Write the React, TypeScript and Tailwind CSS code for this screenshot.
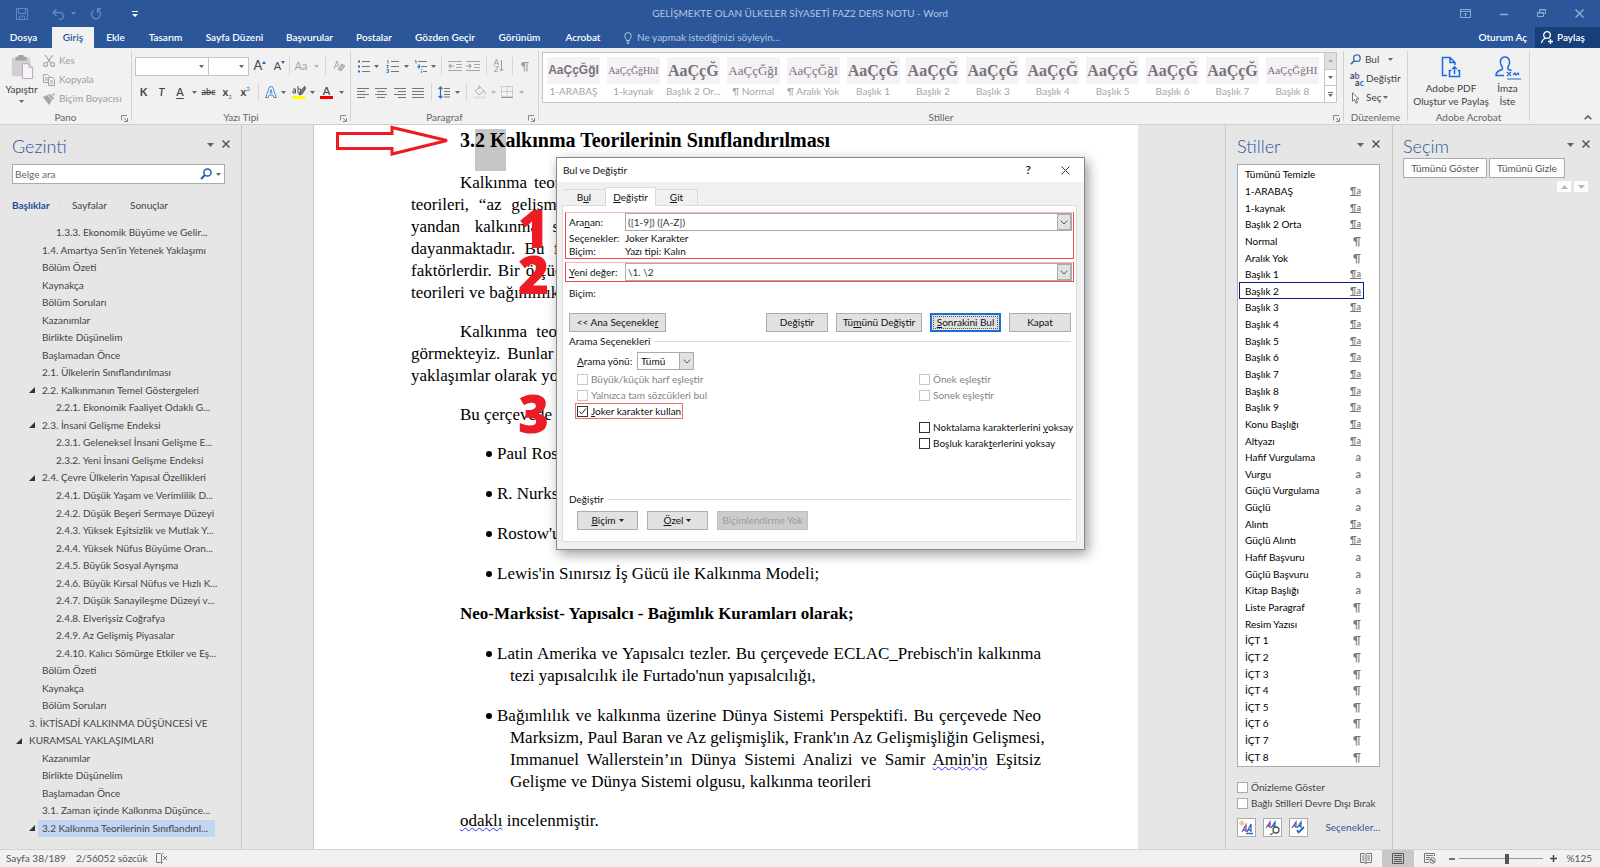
import type { ReactNode } from 'react';

type NavItem = { text: string; level: 1 | 2 | 3; open?: boolean; active?: boolean };

const NAV: NavItem[] = [
  { text: '1.3.3. Ekonomik Büyüme ve Gelir...', level: 3 },
  { text: '1.4. Amartya Sen’in Yetenek Yaklaşımı', level: 2 },
  { text: 'Bölüm Özeti', level: 2 },
  { text: 'Kaynakça', level: 2 },
  { text: 'Bölüm Soruları', level: 2 },
  { text: 'Kazanımlar', level: 2 },
  { text: 'Birlikte Düşünelim', level: 2 },
  { text: 'Başlamadan Önce', level: 2 },
  { text: '2.1. Ülkelerin Sınıflandırılması', level: 2 },
  { text: '2.2. Kalkınmanın Temel Göstergeleri', level: 2, open: true },
  { text: '2.2.1. Ekonomik Faaliyet Odaklı G...', level: 3 },
  { text: '2.3. İnsani Gelişme Endeksi', level: 2, open: true },
  { text: '2.3.1. Geleneksel İnsani Gelişme E...', level: 3 },
  { text: '2.3.2. Yeni İnsani Gelişme Endeksi', level: 3 },
  { text: '2.4. Çevre Ülkelerin Yapısal Özellikleri', level: 2, open: true },
  { text: '2.4.1. Düşük Yaşam ve Verimlilik D...', level: 3 },
  { text: '2.4.2. Düşük Beşeri Sermaye Düzeyi', level: 3 },
  { text: '2.4.3. Yüksek Eşitsizlik ve Mutlak Y...', level: 3 },
  { text: '2.4.4. Yüksek Nüfus Büyüme Oran...', level: 3 },
  { text: '2.4.5. Büyük Sosyal Ayrışma', level: 3 },
  { text: '2.4.6. Büyük Kırsal Nüfus ve Hızlı K...', level: 3 },
  { text: '2.4.7. Düşük Sanayileşme Düzeyi v...', level: 3 },
  { text: '2.4.8. Elverişsiz Coğrafya', level: 3 },
  { text: '2.4.9. Az Gelişmiş Piyasalar', level: 3 },
  { text: '2.4.10. Kalıcı Sömürge Etkiler ve Eş...', level: 3 },
  { text: 'Bölüm Özeti', level: 2 },
  { text: 'Kaynakça', level: 2 },
  { text: 'Bölüm Soruları', level: 2 },
  { text: '3. İKTİSADİ KALKINMA DÜŞÜNCESİ VE', level: 1 },
  { text: 'KURAMSAL YAKLAŞIMLARI', level: 1, open: true },
  { text: 'Kazanımlar', level: 2 },
  { text: 'Birlikte Düşünelim', level: 2 },
  { text: 'Başlamadan Önce', level: 2 },
  { text: '3.1. Zaman içinde Kalkınma Düşünce...', level: 2 },
  { text: '3.2 Kalkınma Teorilerinin Sınıflandırıl...', level: 2, open: true, active: true },
];

const LEVEL_PAD = { 1: 'pl-4', 2: 'pl-[29px]', 3: 'pl-[43px]' };

// kind: l = bağlı (paragraf + karakter), p = paragraf, c = karakter
const STYLES: [string, string][] = [
  ['Tümünü Temizle', ''],
  ['1-ARABAŞ', 'l'],
  ['1-kaynak', 'l'],
  ['Başlık 2 Orta', 'l'],
  ['Normal', 'p'],
  ['Aralık Yok', 'p'],
  ['Başlık 1', 'l'],
  ['Başlık 2', 'l'],
  ['Başlık 3', 'l'],
  ['Başlık 4', 'l'],
  ['Başlık 5', 'l'],
  ['Başlık 6', 'l'],
  ['Başlık 7', 'l'],
  ['Başlık 8', 'l'],
  ['Başlık 9', 'l'],
  ['Konu Başlığı', 'l'],
  ['Altyazı', 'l'],
  ['Hafif Vurgulama', 'c'],
  ['Vurgu', 'c'],
  ['Güçlü Vurgulama', 'c'],
  ['Güçlü', 'c'],
  ['Alıntı', 'l'],
  ['Güçlü Alıntı', 'l'],
  ['Hafif Başvuru', 'c'],
  ['Güçlü Başvuru', 'c'],
  ['Kitap Başlığı', 'c'],
  ['Liste Paragraf', 'p'],
  ['Resim Yazısı', 'p'],
  ['İÇT 1', 'p'],
  ['İÇT 2', 'p'],
  ['İÇT 3', 'p'],
  ['İÇT 4', 'p'],
  ['İÇT 5', 'p'],
  ['İÇT 6', 'p'],
  ['İÇT 7', 'p'],
  ['İÇT 8', 'p'],
];

const BIG = 'font-["Liberation_Serif"] font-bold text-[16px]';
const GALLERY = [
  { name: '1-ARABAŞ', sample: 'AaÇçĞğI', cls: 'font-["Liberation_Sans"] font-bold text-[12px]' },
  { name: '1-kaynak', sample: 'AaÇçĞğHhI', cls: 'font-["Liberation_Serif"] text-[10px]' },
  { name: 'Başlık 2 Or...', sample: 'AaÇçĞ', cls: BIG },
  { name: '¶ Normal', sample: 'AaÇçĞğI', cls: 'font-["Liberation_Serif"] text-[13px]' },
  { name: '¶ Aralık Yok', sample: 'AaÇçĞğI', cls: 'font-["Liberation_Serif"] text-[13px]' },
  { name: 'Başlık 1', sample: 'AaÇçĞ', cls: BIG },
  { name: 'Başlık 2', sample: 'AaÇçĞ', cls: BIG },
  { name: 'Başlık 3', sample: 'AaÇçĞ', cls: BIG },
  { name: 'Başlık 4', sample: 'AaÇçĞ', cls: BIG },
  { name: 'Başlık 5', sample: 'AaÇçĞ', cls: BIG },
  { name: 'Başlık 6', sample: 'AaÇçĞ', cls: BIG },
  { name: 'Başlık 7', sample: 'AaÇçĞ', cls: BIG },
  { name: 'Başlık 8', sample: 'AaÇçĞğHI', cls: 'font-["Liberation_Serif"] text-[11px]' },
];

function Caret({ className = 'text-[#666]' }: { className?: string }) {
  return (
    <svg viewBox="0 0 5 3" className={`h-[3px] w-[5px] shrink-0 ${className}`}>
      <path d="M0 0h5L2.5 3z" fill="currentColor" />
    </svg>
  );
}

function Chevron() {
  return (
    <svg viewBox="0 0 8 5" className="h-[5px] w-2" fill="none" stroke="#555">
      <path d="M.7.7 4 4 7.300.7" />
    </svg>
  );
}

function Cell({ w, label, children }: { w: string; label: string; children: ReactNode }) {
  return (
    <button aria-label={label} className={`flex h-[18px] shrink-0 items-center justify-center ${w}`}>
      {children}
    </button>
  );
}

function Drop({ w, dim }: { w: string; dim?: boolean }) {
  return (
    <button aria-label="Diğer" className={`flex h-[18px] shrink-0 items-center justify-center ${w}`}>
      <Caret className={dim ? 'text-[#b5b5b5]' : 'text-[#666]'} />
    </button>
  );
}

function Bar({ w }: { w: string }) {
  return (
    <span className={`flex h-[18px] shrink-0 justify-center ${w}`}>
      <span className="w-px bg-[#d4d4d4]" />
    </span>
  );
}

function Divider() {
  return <span className="my-[3px] w-px shrink-0 bg-[#d2d2d2]" />;
}

function Group({
  label,
  w,
  launcher,
  children,
}: {
  label: string;
  w: string;
  launcher?: boolean;
  children: ReactNode;
}) {
  return (
    <section className={`flex flex-col ${w}`}>
      <div className="h-[63px]">{children}</div>
      <div className="relative h-[13px] text-center text-[10px] leading-[13px] text-[#666]">
        {label}
        {launcher && (
          <button aria-label={`${label} ayarları`} className="absolute right-[3px] top-1">
            <svg viewBox="0 0 7 7" className="h-[7px] w-[7px]" fill="none" stroke="#888">
              <path d="M.5 5.500V.5H6M3 3l3 3M6.500 3v3.500H3" />
            </svg>
          </button>
        )}
      </div>
    </section>
  );
}

function Lines({ rows }: { rows: [number, number][] }) {
  return (
    <svg viewBox="0 0 12 11" className="h-[11px] w-3" stroke="#777">
      {rows.map(([a, b], i) => (
        <path key={i} d={`M${a} ${i * 3 + 1}.5H${b}`} />
      ))}
    </svg>
  );
}

function ListIcon({ kind }: { kind: 'dot' | 'num' | 'multi' }) {
  return (
    <svg viewBox="0 0 13 13" className="h-[13px] w-[13px]" stroke="#777">
      {kind === 'dot' && (
        <>
          <path d="M5 1.500h8M5 6.500h8M5 11.500h8" />
          <path d="M1 1.500h2M1 6.500h2M1 11.500h2" stroke="#2b6cb5" strokeWidth="2" />
        </>
      )}
      {kind === 'num' && (
        <>
          <path d="M5 1.500h8M5 6.500h8M5 11.500h8" />
          <path d="M1 .5h1v3M.5 5.500h2l-1.500 2h1.500M.5 9.500h2v3H.5M1 11h1" fill="none" stroke="#2b6cb5" strokeWidth=".8" />
        </>
      )}
      {kind === 'multi' && (
        <>
          <path d="M4 1.500h9M7 6.500h6M9 11.500h4" />
          <path d="M1 .5h1v3M4 5h1.500v3H4V6.500h1.500M7.500 9v1M7.500 11v2" fill="none" stroke="#2b6cb5" strokeWidth=".9" />
        </>
      )}
    </svg>
  );
}

function IndentIcon({ out }: { out?: boolean }) {
  return (
    <svg viewBox="0 0 14 11" className="h-[11px] w-[14px]" fill="none" stroke="#a5a5a5">
      <path d="M0 .5h14M8 3.500h6M8 6.500h6M0 9.500h14" />
      <path d={out ? 'M6 5H1M3 3 1 5l2 2' : 'M0 5h5M3 3l2 2-2 2'} strokeWidth="1.200" />
    </svg>
  );
}

function SearchIcon({ color, size }: { color: string; size: string }) {
  return (
    <svg viewBox="0 0 12 12" className={size} fill="none" stroke={color}>
      <circle cx="7.500" cy="4.500" r="3.600" strokeWidth="1.500" />
      <path d="M5 7 1 11" strokeWidth="2" />
    </svg>
  );
}

function TitleBar() {
  return (
    <header className="relative flex h-[27px] items-center bg-[#2b579a] text-[#6487bd]">
      <button aria-label="Kaydet" className="ml-4">
        <svg viewBox="0 0 12 12" className="h-3 w-3" fill="none" stroke="currentColor">
          <path d="M.5.5h11v11H.500zM2.500.5v5h7v-5M3.500 11.500v-3.500h5v3.500" />
        </svg>
      </button>
      <button aria-label="Geri al" className="ml-6">
        <svg viewBox="0 0 13 12" className="h-3 w-[13px]" fill="none" stroke="currentColor" strokeWidth="1.500">
          <path d="M4.500 1 1 4.500 4.500 8M1 4.500h7a3.500 3.500 0 0 1 0 7H6.500" />
        </svg>
      </button>
      <button aria-label="Geri al listesi" className="ml-[6px]">
        <Caret className="text-[#6487bd]" />
      </button>
      <button aria-label="Yinele" className="ml-[14px]">
        <svg viewBox="0 0 12 12" className="h-3 w-3" fill="none" stroke="currentColor" strokeWidth="1.400">
          <path d="M8 2.200A4.500 4.500 0 1 1 3.500 2.500M7 .8h4M7.600 1v4" />
        </svg>
      </button>
      <button aria-label="Hızlı erişim" className="ml-[30px]">
        <svg viewBox="0 0 6 6" className="h-[6px] w-[6px]" fill="#fff">
          <path d="M0 0h6v1H0zM0 3h6L3 6z" />
        </svg>
      </button>
      <h1 className="absolute inset-x-0 text-center text-[10px] leading-[27px] text-[#b4c6e0]">
        GELİŞMEKTE OLAN ÜLKELER SİYASETİ FAZ2 DERS NOTU - Word
      </h1>
      <div className="relative ml-auto mr-4 flex items-center gap-[29px] text-[#8ea9d1]">
        <button aria-label="Şerit seçenekleri">
          <svg viewBox="0 0 11 9" className="h-[9px] w-[11px]" fill="none" stroke="currentColor">
            <path d="M.5.5h10v8H.500zM.5 2.500h10M5.500 7.500V4M4 5.500 5.500 4 7 5.500" />
          </svg>
        </button>
        <button aria-label="Simge durumuna küçült">
          <svg viewBox="0 0 8 9" className="h-[9px] w-2" stroke="currentColor" strokeWidth="1.500">
            <path d="M0 5.500h8" />
          </svg>
        </button>
        <button aria-label="Geri yükle">
          <svg viewBox="0 0 9 9" className="h-[9px] w-[9px]" fill="none" stroke="currentColor">
            <path d="M.5 3.500h6v4H.500zM2.500 3.500v-3h6v4h-2M2.500 1h6M.5 4h6" />
          </svg>
        </button>
        <button aria-label="Kapat">
          <svg viewBox="0 0 9 9" className="h-[9px] w-[9px]" stroke="currentColor" strokeWidth="1.500">
            <path d="M.5.5l8 8M8.500.5l-8 8" />
          </svg>
        </button>
      </div>
    </header>
  );
}

const TABS = [
  ['Ekle', 'w-[43px]'],
  ['Tasarım', 'w-[57px]'],
  ['Sayfa Düzeni', 'w-[81px]'],
  ['Başvurular', 'w-[69px]'],
  ['Postalar', 'w-[60px]'],
  ['Gözden Geçir', 'w-[82px]'],
  ['Görünüm', 'w-[67px]'],
  ['Acrobat', 'w-[60px]'],
];

function TabRow() {
  return (
    <nav className="flex h-[21px] items-center bg-[#2b579a] text-[10px] font-semibold text-white">
      <button className="w-[47px]">Dosya</button>
      <button className="ml-[5px] h-full w-[42px] bg-[#f1f1f1] text-[#2b579a]">Giriş</button>
      {TABS.map(([t, w]) => (
        <button key={t} className={`shrink-0 whitespace-nowrap ${w}`}>
          {t}
        </button>
      ))}
      <label className="ml-[11px] flex flex-1 items-center gap-[5px] text-[#b4c6e0]">
        <svg viewBox="0 0 8 12" className="h-3 w-2" fill="none" stroke="currentColor">
          <path d="M2.500 8.500C2.500 7 .8 6 .8 3.800a3.200 3.200 0 0 1 6.400 0C7.200 6 5.500 7 5.500 8.500zM2.500 10h3M3 11.500h2" />
        </svg>
        <input
          aria-label="Yardım"
          placeholder="Ne yapmak istediğinizi söyleyin..."
          className="w-48 font-normal outline-none placeholder:text-[#b4c6e0]"
        />
      </label>
      <button className="mr-2">Oturum Aç</button>
      <button className="flex h-full w-[65px] items-center gap-1 bg-[#173f7a] pl-[6px]">
        <svg viewBox="0 0 12 13" className="h-[13px] w-3" fill="none" stroke="currentColor" strokeWidth="1.300">
          <circle cx="6" cy="4" r="3.300" />
          <path d="M4.500 7C2.500 8 .7 9.500.7 12M9.500 8v5M7 10.500h5" />
        </svg>
        Paylaş
      </button>
    </nav>
  );
}

function Ribbon() {
  return (
    <div className="flex h-[77px] border-b border-[#cfcfcf] bg-[#f1f1f1] text-[#444]">
      <Group label="Pano" w="w-[131px]" launcher>
        <div className="flex h-full">
          <button className="flex w-[43px] flex-col items-center pt-[7px]">
            <svg viewBox="0 0 24 26" className="h-6 w-6">
              <path d="M1 3h20v20H1z" fill="#d3cfd3" />
              <path d="M5 2h3a3 3 0 0 1 6 0h3v4H5z" fill="#a3a0a3" />
              <path d="M12.500 9.500h7l4 4v12h-11z" fill="#f8f2fa" stroke="#aba5b5" />
              <path d="M19.500 9.500v4h4" fill="none" stroke="#aba5b5" />
            </svg>
            <span className="mt-[3px] text-[10px] leading-[14px]">Yapıştır</span>
            <span className="mt-1">
              <Caret />
            </span>
          </button>
          <div className="flex flex-col pt-[3px] text-[10px] text-[#a0a0a0]">
            <button className="flex h-[19px] items-center gap-1">
              <svg viewBox="0 0 12 12" className="h-3 w-3" fill="none" stroke="#a5a5a5" strokeWidth="1.200">
                <path d="M2 0l6 8M10 0 4 8" />
                <circle cx="2.500" cy="9.500" r="2" />
                <circle cx="9.500" cy="9.500" r="2" />
              </svg>
              Kes
            </button>
            <button className="flex h-[19px] items-center gap-1">
              <svg viewBox="0 0 12 12" className="h-3 w-3" fill="#f1f1f1" stroke="#a5a5a5">
                <path d="M.5.5h4l2 2v6h-6z" />
                <path d="M5.500 3.500h4l2 2v6h-6zM7 7h3M7 9h3M2 4h3M2 6h3" />
              </svg>
              Kopyala
            </button>
            <button className="flex h-[19px] items-center gap-1 whitespace-nowrap">
              <svg viewBox="0 0 12 12" className="h-3 w-3" fill="#a5a5a5">
                <path d="M0 4l4-2 5 5-3 5zM5 2l2-1 4 4-1 2zM9 2l2-2 1 1-2 2z" />
              </svg>
              Biçim Boyacısı
            </button>
          </div>
        </div>
      </Group>
      <Divider />
      <Group label="Yazı Tipi" w="w-[218px]" launcher>
        <div className="flex pl-[3px] pt-[9px]">
          <div className="flex h-[19px] w-[74px] items-center border border-[#c6c6c6] bg-white pr-1">
            <input aria-label="Yazı tipi" className="min-w-0 flex-1 outline-none" />
            <Caret />
          </div>
          <div className="-ml-px flex h-[19px] w-[41px] items-center border border-[#c6c6c6] bg-white pr-1">
            <input aria-label="Boyut" className="min-w-0 flex-1 outline-none" />
            <Caret />
          </div>
          <Cell w="w-[22px]" label="Büyüt">
            <span className="text-[13px]">A</span>
            <svg viewBox="0 0 4 3" className="mb-2 h-[3px] w-1" fill="#2b6cb5">
              <path d="M0 3h4L2 0z" />
            </svg>
          </Cell>
          <Cell w="w-[17px]" label="Küçült">
            <span className="text-[11px]">A</span>
            <svg viewBox="0 0 4 3" className="mb-2 h-[3px] w-1" fill="#2b6cb5">
              <path d="M0 0h4L2 3z" />
            </svg>
          </Cell>
          <Bar w="w-[3px]" />
          <Cell w="w-[20px]" label="Büyük küçük harf">
            <span className="text-[11px] text-[#a5a5a5]">Aa</span>
          </Cell>
          <Drop w="w-[10px]" dim />
          <Bar w="w-[8px]" />
          <Cell w="w-[20px]" label="Biçimlendirmeyi temizle">
            <svg viewBox="0 0 12 12" className="h-3 w-3" fill="none" stroke="#aaa">
              <path d="M1 9 4 1l2 5M2 6h3" />
              <path d="M5 9l4-5 3 2-4 5z" fill="#bbb" />
            </svg>
          </Cell>
        </div>
        <div className="flex pl-[3px] pt-[7px] text-[11px]">
          <Cell w="w-[17px]" label="Kalın">
            <b>K</b>
          </Cell>
          <Cell w="w-[19px]" label="İtalik">
            <i className="font-semibold">T</i>
          </Cell>
          <Cell w="w-[18px]" label="Altı çizili">
            <span className="font-semibold underline underline-offset-2">A</span>
          </Cell>
          <Drop w="w-[10px]" />
          <Cell w="w-[19px]" label="Üstü çizili">
            <span className="text-[9px] font-semibold line-through">abc</span>
          </Cell>
          <Cell w="w-[18px]" label="Alt simge">
            <b>x</b>
            <span className="mt-2 text-[6px] text-[#2b6cb5]">2</span>
          </Cell>
          <Cell w="w-[18px]" label="Üst simge">
            <b>x</b>
            <span className="mb-2 text-[6px] text-[#2b6cb5]">2</span>
          </Cell>
          <Bar w="w-[8px]" />
          <Cell w="w-[17px]" label="Metin efektleri">
            <svg viewBox="0 0 12 13" className="h-[13px] w-3" fill="#fff" stroke="#4a86c5">
              <path d="M.7 11.500 4.500.8h3l3.800 10.700H8.800L8 9H4l-.8 2.500zM4.800 7h2.400L6 3.500z" />
            </svg>
          </Cell>
          <Drop w="w-[9px]" />
          <Cell w="w-[21px]" label="Vurgu rengi">
            <svg viewBox="0 0 14 14" className="h-[14px] w-[14px]" fill="none" stroke="#555">
              <path d="M1 4h2.500v4H1V6h2.500M6 1v7h2.500V4H6" />
              <path d="M13 1 8 7l-1 3 3-1 4-6" fill="#777" />
              <path d="M0 12.500h13" stroke="#ffff00" strokeWidth="3" />
            </svg>
          </Cell>
          <Drop w="w-[7px]" />
          <Cell w="w-[21px]" label="Yazı rengi">
            <span className="border-b-[3px] border-[#f00000] px-[3px] font-semibold leading-[11px]">A</span>
          </Cell>
          <Drop w="w-[8px]" />
        </div>
      </Group>
      <Divider />
      <Group label="Paragraf" w="w-[187px]" launcher>
        <div className="flex pl-1 pt-[9px]">
          <Cell w="w-[16px]" label="Madde işaretleri">
            <ListIcon kind="dot" />
          </Cell>
          <Drop w="w-[11px]" />
          <Cell w="w-[20px]" label="Numaralandırma">
            <ListIcon kind="num" />
          </Cell>
          <Drop w="w-[8px]" />
          <Cell w="w-[20px]" label="Çok düzeyli liste">
            <ListIcon kind="multi" />
          </Cell>
          <Drop w="w-[7px]" />
          <Bar w="w-[9px]" />
          <Cell w="w-[17px]" label="Girintiyi azalt">
            <IndentIcon out />
          </Cell>
          <Cell w="w-[19px]" label="Girintiyi artır">
            <IndentIcon />
          </Cell>
          <Bar w="w-[8px]" />
          <Cell w="w-[18px]" label="Sırala">
            <span className="flex flex-col text-[8px] leading-[7px] text-[#999]">
              <span>A</span>
              <span>Z</span>
            </span>
            <svg viewBox="0 0 5 12" className="h-3 w-[5px]" fill="none" stroke="#999">
              <path d="M2.500 0v11M.5 9l2 2 2-2" />
            </svg>
          </Cell>
          <Bar w="w-[8px]" />
          <Cell w="w-[18px]" label="Tümünü göster">
            <span className="text-[12px] text-[#999]">¶</span>
          </Cell>
        </div>
        <div className="flex pl-1 pt-2">
          <Cell w="w-[16px]" label="Sola hizala">
            <Lines rows={[[0, 12], [0, 8], [0, 12], [0, 8]]} />
          </Cell>
          <Cell w="w-[20px]" label="Ortala">
            <Lines rows={[[0, 12], [2, 10], [0, 12], [2, 10]]} />
          </Cell>
          <Cell w="w-[18px]" label="Sağa hizala">
            <Lines rows={[[0, 12], [4, 12], [0, 12], [4, 12]]} />
          </Cell>
          <Cell w="w-[18px]" label="İki yana yasla">
            <Lines rows={[[0, 12], [0, 12], [0, 12], [0, 12]]} />
          </Cell>
          <Bar w="w-[8px]" />
          <Cell w="w-[18px]" label="Satır aralığı">
            <svg viewBox="0 0 12 13" className="h-[13px] w-3" fill="none" stroke="#777">
              <path d="M6 2.500h6M6 5.500h6M6 8.500h6M6 11h6" />
              <path d="M2.500 1v11M.5 3l2-2 2 2M.5 10l2 2 2-2" stroke="#2b6cb5" strokeWidth="1.200" />
            </svg>
          </Cell>
          <Drop w="w-[8px]" />
          <Bar w="w-[10px]" />
          <Cell w="w-[17px]" label="Gölgelendirme">
            <svg viewBox="0 0 14 14" className="h-[14px] w-[14px]" fill="none" stroke="#b0b0b0">
              <path d="M2 6l5-4 4 4-5 4zM6 0v4M11.500 6c1 1.500 1 2.500.5 3.500" />
              <path d="M0 12.500h13" stroke="#e6e0e4" strokeWidth="2.500" />
            </svg>
          </Cell>
          <Drop w="w-[10px]" dim />
          <Cell w="w-[18px]" label="Kenarlıklar">
            <svg viewBox="0 0 12 12" className="h-3 w-3" fill="none" stroke="#b5a9b5">
              <path d="M.5.5h11v10H.500zM6 .5v10M.5 5.500h11" strokeDasharray="1 1" />
              <path d="M0 11.500h12" stroke="#999" />
            </svg>
          </Cell>
          <Drop w="w-[10px]" dim />
        </div>
      </Group>
      <Divider />
      <Group label="Stiller" w="min-w-0 flex-1" launcher>
        <div className="ml-[3px] mr-[6px] mt-1 flex h-[51px] border border-[#c6c6c6] bg-white">
          <div className="flex min-w-0 flex-1 justify-between overflow-hidden pl-1 pr-[5px] pt-1">
            {GALLERY.map((g) => (
              <button key={g.name} className="flex w-[53px] flex-col items-center">
                <span
                  className={`h-[27px] w-full whitespace-nowrap bg-[#f5f1f7] text-center leading-[27px] text-[#757575] ${g.cls}`}
                >
                  {g.sample}
                </span>
                <span className="whitespace-nowrap text-[10px] leading-[15px] text-[#a5a5a5]">{g.name}</span>
              </button>
            ))}
          </div>
          <div className="flex w-3 flex-col divide-y divide-[#c6c6c6] border-l border-[#c6c6c6]">
            <button aria-label="Yukarı" className="flex flex-1 items-center justify-center bg-[#e1e1e1]">
              <Caret className="rotate-180 text-[#aaa]" />
            </button>
            <button aria-label="Aşağı" className="flex flex-1 items-center justify-center">
              <Caret />
            </button>
            <button aria-label="Tüm stiller" className="flex flex-1 flex-col items-center justify-center gap-px">
              <span className="h-px w-[5px] bg-[#666]" />
              <Caret />
            </button>
          </div>
        </div>
      </Group>
      <Divider />
      <Group label="Düzenleme" w="w-[63px]">
        <div className="flex flex-col pl-[6px] pt-[2px] text-[10px]">
          <button className="flex h-[19px] items-center gap-1">
            <SearchIcon color="#3f73b5" size="h-[11px] w-[11px]" />
            Bul
            <span className="ml-[5px]">
              <Caret />
            </span>
          </button>
          <button className="flex h-[19px] items-center gap-[2px]">
            <span className="flex w-[14px] flex-col text-[9px] font-bold leading-[7px]">
              <span className="self-start">
                a<span className="text-[#8050a5]">b</span>
              </span>
              <span className="self-end">
                a<span className="text-[#2b6cb5]">c</span>
              </span>
            </span>
            Değiştir
          </button>
          <button className="flex h-[19px] items-center gap-[6px] pl-[2px]">
            <svg viewBox="0 0 8 12" className="h-3 w-2" fill="#fff" stroke="#777">
              <path d="M.5.8v8.500l2-2 1.500 4 1.500-.7L4 7h3z" />
            </svg>
            <span className="flex items-center gap-[2px]">
              Seç
              <Caret />
            </span>
          </button>
        </div>
      </Group>
      <Divider />
      <Group label="Adobe Acrobat" w="w-[121px]">
        <div className="flex pt-2 text-[10px] leading-[13px]">
          <button className="flex w-[86px] flex-col items-center whitespace-nowrap">
            <svg viewBox="0 0 20 22" className="mb-1 h-[22px] w-5" fill="none" stroke="#1b6ae0" strokeWidth="1.500">
              <path d="M6 19.500H1.500V1.500H9l5 5V9M9 1.500v5h5" />
              <path d="M10.500 14.500H8.500v6h10v-6h-2M13.500 18v-7M11.200 13l2.300-2.300L15.800 13" />
            </svg>
            <span>Adobe PDF</span>
            <span>Oluştur ve Paylaş</span>
          </button>
          <button className="flex w-[27px] flex-col items-center">
            <svg viewBox="0 0 26 24" className="mb-[2px] h-6 w-[26px]" fill="none" stroke="#1b6ae0" strokeWidth="1.500">
              <path d="M9 19.500H1c0-4 3-5 6-6 1-.5.500-2-.5-3.500C4 5 6 1 10 1s6 4 3.500 9c-1 1.500-.8 3 0 3.500l3 1" />
              <path d="M12 16l4 4M16 16l-4 4M18 19l2-2 1 2 2-2 1 2M12 23h14" strokeWidth="1.200" />
            </svg>
            <span>İmza</span>
            <span>İste</span>
          </button>
        </div>
      </Group>
      <Divider />
      <div className="flex w-[70px] items-end justify-end pb-1 pr-2">
        <button aria-label="Şeridi daralt">
          <svg viewBox="0 0 8 5" className="h-[5px] w-2" fill="none" stroke="#555" strokeWidth="1.500">
            <path d="M.7 4.300 4 1l3.300 3.300" />
          </svg>
        </button>
      </div>
    </div>
  );
}

function PaneHead({ title }: { title: string }) {
  return (
    <div className="flex h-[39px] items-start">
      <h2 className="flex-1 pt-2 text-[18px] font-light leading-[27px] text-[#2b579a]">{title}</h2>
      <button aria-label="Bölme seçenekleri" className="mt-[18px]">
        <svg viewBox="0 0 7 4" className="h-1 w-[7px]">
          <path d="M0 0h7L3.500 4z" fill="#666" />
        </svg>
      </button>
      <button aria-label={`${title} bölmesini kapat`} className="ml-2 mt-[15px]">
        <svg viewBox="0 0 8 8" className="h-2 w-2" stroke="#555" strokeWidth="1.500">
          <path d="M.5.5l7 7M7.500.5l-7 7" />
        </svg>
      </button>
    </div>
  );
}

function NavPane() {
  return (
    <aside className="flex w-[242px] shrink-0 flex-col border-r border-[#c6c6c6] pb-3">
      <div className="pl-3 pr-[11px]">
        <PaneHead title="Gezinti" />
      </div>
      <div className="ml-3 mr-4 flex h-5 items-center border border-[#ababab] bg-white pl-[2px] pr-[3px]">
        <input
          aria-label="Belge ara"
          placeholder="Belge ara"
          className="min-w-0 flex-1 text-[10px] outline-none placeholder:text-[#666]"
        />
        <SearchIcon color="#1f5aa8" size="h-3 w-3" />
        <span className="ml-1">
          <Caret />
        </span>
      </div>
      <div className="mb-[11px] mt-[13px] flex h-4 items-center pl-3 text-[10px] text-[#444]">
        <button className="w-[48px] text-left font-bold text-[#1f4e96]">Başlıklar</button>
        <button className="w-[57px] border-l border-[#e0e0e0] pl-[11px] text-left">Sayfalar</button>
        <button className="border-l border-[#e0e0e0] pl-[12px] text-left">Sonuçlar</button>
      </div>
      <ul className="mr-[26px] flex flex-1 flex-col text-[10px] text-[#444]">
        {NAV.map((n, i) => (
          <li key={i} className={`flex flex-1 items-center ${LEVEL_PAD[n.level]}`}>
            <span className="w-[9px] shrink-0">
              {n.open && (
                <svg viewBox="0 0 6 6" className="h-[6px] w-[6px]">
                  <path d="M6 0v6H0z" fill="#333" />
                </svg>
              )}
            </span>
            <a
              href="#"
              className={`flex-1 whitespace-nowrap pl-1 leading-[17px] ${n.active ? 'bg-[#c2d5f2]' : ''}`}
            >
              {n.text}
            </a>
          </li>
        ))}
      </ul>
    </aside>
  );
}

// Satır sonları belgede sabit; son satır dışındakiler iki yana yaslanır.
function Justified({ lines, first = '' }: { lines: string[]; first?: string }) {
  return (
    <p className="mt-[17px]">
      {lines.map((l, i) => (
        <span
          key={l}
          className={`block whitespace-nowrap ${i < lines.length - 1 ? '[text-align-last:justify]' : ''} ${
            i === 0 ? first : ''
          }`}
        >
          {l}
        </span>
      ))}
    </p>
  );
}

function Bullet({ children }: { children: ReactNode }) {
  return (
    <li className="mt-[18px] flex pl-[75px]">
      <span className="mt-2 h-[6px] w-[6px] shrink-0 rounded-full bg-black" />
      <div className="min-w-0 flex-1 pl-[5px]">{children}</div>
    </li>
  );
}

const WAVY = 'underline decoration-[#3333ff] decoration-wavy decoration-1 underline-offset-1';

function Document() {
  return (
    <main className="ml-[71px] mr-[87px] min-w-0 flex-1 overflow-hidden border-l border-[#c6c6c6] bg-white px-[97px] font-['Liberation_Serif'] text-[17px] leading-[22px] text-black">
      <h2 className="pl-[49px] text-[20px] font-bold leading-[30px]">
        3.<mark className="bg-[#c6c6c6] pb-5 text-black">2 K</mark>alkınma Teorilerinin Sınıflandırılması
      </h2>
      <Justified
        first="pl-[49px]"
        lines={[
          'Kalkınma teorileri literatürde farklı biçimlerde ele alınmıştır. Kalkınma olgusu ile',
          'teorileri, “az gelişmişlik” olgusunun tarihsel nedenlerini açıklamaya çalışır ve de öte',
          'yandan kalkınma sürecinin hangi temel toplumsal dinamiklere ise bağlı kaldığı',
          'dayanmaktadır. Bu faktörler hem içsel yapısal hem de dışsal temelli ve kökenli olan',
          'faktörlerdir. Bir ölçüde bu ayrım modernleşme okulunun görüşleri ile ilgili tüm anlayışlar',
          'teorileri ve bağımlılık teorilerini kapsamaktadır.',
        ]}
      />
      <Justified
        first="pl-[49px]"
        lines={[
          'Kalkınma teorilerini temel olarak iki önemli ana başlık altında toplandığını da',
          'görmekteyiz. Bunlar ana akım iktisat okulları ile daha çok eleştirel ve yapısalcı olan bir',
          'yaklaşımlar olarak yorumlanabilir.',
        ]}
      />
      <p className="mt-[17px] pl-[49px]">Bu çerçevede Modernleşme kuramları olarak;</p>
      <ul className="-mt-px">
        <Bullet>Paul Rosenstein-Rodan'ın Büyük İtiş Modeli;</Bullet>
        <Bullet>R. Nurkse'nin Dengeli Kalkınma Modeli;</Bullet>
        <Bullet>Rostow'un Kalkınma Aşamaları Modeli;</Bullet>
        <Bullet>Lewis'in Sınırsız İş Gücü ile Kalkınma Modeli;</Bullet>
      </ul>
      <p className="mt-[18px] pl-[49px] font-bold">Neo-Marksist- Yapısalcı - Bağımlık Kuramları olarak;</p>
      <ul>
        <Bullet>
          <span className="block whitespace-nowrap [text-align-last:justify]">
            Latin Amerika ve Yapısalcı tezler. Bu çerçevede ECLAC_Prebisch'in kalkınma
          </span>
          <span className="block pl-[13px]">tezi yapısalcılık ile Furtado'nun yapısalcılığı,</span>
        </Bullet>
        <Bullet>
          <span className="block whitespace-nowrap [text-align-last:justify]">
            Bağımlılık ve kalkınma üzerine Dünya Sistemi Perspektifi. Bu çerçevede Neo
          </span>
          <span className="block whitespace-nowrap pl-[13px] [text-align-last:justify]">
            Marksizm, Paul Baran ve Az gelişmişlik, Frank'ın Az Gelişmişliğin Gelişmesi,
          </span>
          <span className="block whitespace-nowrap pl-[13px] [text-align-last:justify]">
            Immanuel Wallerstein’ın Dünya Sistemi Analizi ve Samir <span className={WAVY}>Amin'in</span> Eşitsiz
          </span>
          <span className="block pl-[13px]">Gelişme ve Dünya Sistemi olgusu, kalkınma teorileri</span>
        </Bullet>
      </ul>
      <p className="mt-[17px] pl-[49px]">
        <span className={WAVY}>odaklı</span> incelenmiştir.
      </p>
    </main>
  );
}

function StyleMark({ kind }: { kind: string }) {
  if (kind === 'l') {
    return <span className="border-b border-[#777] text-[9px] font-semibold leading-[9px] text-[#777]">¶a</span>;
  }
  return (
    <span className="text-[11px] font-semibold leading-[12px] text-[#777]">
      {kind === 'p' ? '¶' : kind === 'c' ? 'a' : ''}
    </span>
  );
}

function StylesPane() {
  return (
    <aside className="flex w-[168px] shrink-0 flex-col border-l border-r border-[#c6c6c6] pb-3 pl-[11px] pr-3 text-[#444]">
      <PaneHead title="Stiller" />
      <ul className="flex flex-1 flex-col border border-[#ababab] bg-white py-px pl-px pr-[15px] text-[10px] text-black">
        {STYLES.map(([name, kind]) => (
          <li
            key={name}
            className={`flex flex-1 items-center justify-between border pl-[5px] pr-[2px] leading-[14px] ${
              name === 'Başlık 2' ? 'border-[#0a1a80]' : 'border-transparent'
            }`}
          >
            {name}
            <StyleMark kind={kind} />
          </li>
        ))}
      </ul>
      <div className="mt-3 text-[10px]">
        {['Önizleme Göster', 'Bağlı Stilleri Devre Dışı Bırak'].map((t) => (
          <label key={t} className="flex h-4 items-center gap-[3px] whitespace-nowrap">
            <input type="checkbox" className="h-[11px] w-[11px] appearance-none border border-[#ababab] bg-white" />
            {t}
          </label>
        ))}
      </div>
      <div className="mt-[7px] flex h-[19px] items-center gap-[7px]">
        {['Yeni stil', 'Stil denetçisi', 'Stilleri yönet'].map((t, i) => (
          <button
            key={t}
            aria-label={t}
            className="flex h-[19px] w-[19px] items-center justify-center border border-[#ababab] bg-white"
          >
            <svg viewBox="0 0 15 15" className="h-[15px] w-[15px]" fill="none" strokeWidth="1.300">
              <path d={i === 0 ? 'M3 12 7 5v7M4.500 10H7' : 'M1 8l4-6v6M2.500 6H5'} stroke="#8050a5" />
              <path d={i === 0 ? 'M8 12l4-8v8M9.500 10H12M7 13.500h7' : 'M6 8l4-6v6M7.500 6H10'} stroke="#2b6cb5" />
              {i === 0 && <path d="M3 0v6M0 3h6M1 1l4 4M5 1 1 5" stroke="#e8b45a" strokeWidth=".8" />}
              {i === 1 && <path d="M8 13l-3 2M8 10a3 3 0 1 0 6 0 3 3 0 1 0-6 0" stroke="#555" />}
              {i === 2 && <path d="M6 10l1.500 2.500M7 13l6-6" stroke="#2b6cb5" strokeWidth="1.800" />}
            </svg>
          </button>
        ))}
        <a href="#" className="ml-auto text-[10px] text-[#2b579a]">
          Seçenekler...
        </a>
      </div>
    </aside>
  );
}

function SelectionPane() {
  return (
    <aside className="w-[207px] shrink-0 pl-[10px] pr-[10px] text-[#555]">
      <div className="h-[33px]">
        <PaneHead title="Seçim" />
      </div>
      <div className="flex gap-[2px] text-[10px]">
        <button className="h-5 w-[84px] border border-[#ababab] bg-[#fdfdfd]">Tümünü Göster</button>
        <button className="h-5 w-[76px] border border-[#ababab] bg-[#fdfdfd]">Tümünü Gizle</button>
      </div>
      <div className="mr-[2px] mt-[3px] flex justify-end gap-[3px]">
        <button aria-label="Öne getir" className="flex h-[11px] w-[14px] items-center justify-center bg-[#fdfdfd]">
          <svg viewBox="0 0 7 4" className="h-1 w-[7px]">
            <path d="M0 4h7L3.500 0z" fill="#b5b5b5" />
          </svg>
        </button>
        <button aria-label="Arkaya gönder" className="flex h-[11px] w-[14px] items-center justify-center bg-[#fdfdfd]">
          <svg viewBox="0 0 7 4" className="h-1 w-[7px]">
            <path d="M0 0h7L3.500 4z" fill="#b5b5b5" />
          </svg>
        </button>
      </div>
    </aside>
  );
}

function Combo({ id, value }: { id: string; value: string }) {
  return (
    <div className="flex h-[18px] flex-1 border border-[#ababab] bg-white">
      <input id={id} defaultValue={value} className="min-w-0 flex-1 pl-[2px] text-[#333] outline-none" />
      <button
        aria-label="Listeyi aç"
        className="flex w-[14px] items-center justify-center border border-[#ababab] bg-[#e1e1e1]"
      >
        <Chevron />
      </button>
    </div>
  );
}

function Check({
  children,
  disabled,
  checked,
}: {
  children: ReactNode;
  disabled?: boolean;
  checked?: boolean;
}) {
  return (
    <label
      className={`flex h-3 w-fit items-center gap-[3px] whitespace-nowrap ${disabled ? 'text-[#838383]' : ''} ${
        checked ? 'outline outline-offset-1 outline-[#f26d70]' : ''
      }`}
    >
      <span className="relative flex">
        <input
          type="checkbox"
          disabled={disabled}
          defaultChecked={checked}
          className={`peer h-[11px] w-[11px] appearance-none border bg-white ${
            disabled ? 'border-[#c8c8c8]' : 'border-[#333]'
          }`}
        />
        <svg
          viewBox="0 0 11 11"
          className="pointer-events-none absolute inset-0 hidden h-[11px] w-[11px] peer-checked:block"
          fill="none"
          stroke="#222"
        >
          <path d="M2.500 5.500l2 2.500 4.500-5.500" />
        </svg>
      </span>
      <span>{children}</span>
    </label>
  );
}

const BTN = 'h-[19px] border border-[#adadad] bg-[#e1e1e1] text-center whitespace-nowrap';

function Legend({ children }: { children: ReactNode }) {
  return (
    <div className="flex h-[14px] items-center gap-1 pl-1 pr-[3px]">
      {children}
      <span className="h-px flex-1 bg-[#dcdcdc]" />
    </div>
  );
}

function FindReplaceDialog() {
  return (
    <div
      role="dialog"
      aria-label="Bul ve Değiştir"
      className="absolute left-[556px] top-[157px] w-[529px] border border-[#8a8a8a] bg-[#f0f0f0] text-[10px] text-[#111] shadow-[3px_4px_12px_rgba(0,0,0,0.4)]"
    >
      <div className="flex h-[24px] items-center bg-white pl-[6px] pr-[14px]">
        <span className="flex-1">Bul ve Değiştir</span>
        <button aria-label="Yardım" className="mr-[30px] text-[12px] font-semibold">
          ?
        </button>
        <button aria-label="Kapat">
          <svg viewBox="0 0 9 9" className="h-[9px] w-[9px]" stroke="#333">
            <path d="M.5.5l8 8M8.500.5l-8 8" />
          </svg>
        </button>
      </div>
      <div className="flex h-[23px] items-end pl-[6px]">
        <button className="h-4 w-[42px] border-t border-[#d9d9d9]">
          B<u>u</u>l
        </button>
        <button className="z-10 -mb-px h-[19px] w-[51px] border border-b-0 border-[#d9d9d9] bg-white">
          <u>D</u>eğiştir
        </button>
        <button className="h-4 w-[42px] border-r border-t border-[#d9d9d9]">
          <u>G</u>it
        </button>
      </div>
      <div className="mb-[7px] ml-[5px] mr-[7px] border border-[#dcdcdc] bg-white px-[2px] pb-[11px] pt-[6px]">
        <div className="border border-[#f04a4e] border-t-[#f9b5b7] pl-[3px] pr-px">
          <div className="flex items-center">
            <label htmlFor="find" className="w-14">
              Ara<u>n</u>an:
            </label>
            <Combo id="find" value="([1-9]) ([A-Z])" />
          </div>
          <div className="mt-px grid grid-cols-[56px_1fr] leading-[13px]">
            <span>Seçenekler:</span>
            <span>Joker Karakter</span>
            <span>Biçim:</span>
            <span>Yazı tipi: Kalın</span>
          </div>
        </div>
        <div className="mt-[3px] flex items-center border border-[#f04a4e] border-t-[#f9b5b7] pl-[3px] pr-px">
          <label htmlFor="replace" className="w-14">
            <u>Y</u>eni değer:
          </label>
          <Combo id="replace" value="\1. \2" />
        </div>
        <div className="mt-[5px] pl-1 leading-[13px]">Biçim:</div>
        <div className="mt-[13px] flex pl-1 pr-[3px]">
          <button className={`w-[97px] ${BTN}`}>
            &lt;&lt; Ana Seçenekle<u>r</u>
          </button>
          <div className="ml-auto flex gap-2">
            <button className={`w-[62px] ${BTN}`}>Değiştir</button>
            <button className={`w-[86px] ${BTN}`}>
              Tü<u>m</u>ünü Değiştir
            </button>
            <button className="h-[19px] w-[71px] border-2 border-[#1a6fd6] bg-[#e1e1e1] p-px">
              <span className="flex h-full items-center justify-center whitespace-nowrap border border-dotted border-[#555]">
                <span>
                  <u>S</u>onrakini Bul
                </span>
              </span>
            </button>
            <button className={`w-[62px] ${BTN}`}>Kapat</button>
          </div>
        </div>
        <div className="mt-[2px]">
          <Legend>Arama Seçenekleri</Legend>
        </div>
        <div className="mt-1 flex h-[18px] items-center pl-3">
          <label htmlFor="direction" className="w-[60px]">
            <u>A</u>rama yönü:
          </label>
          <div className="relative flex">
            <select
              id="direction"
              defaultValue="Tümü"
              className="h-[18px] w-[57px] appearance-none border border-[#ababab] bg-white pl-[3px]"
            >
              <option>Tümü</option>
              <option>Aşağı</option>
              <option>Yukarı</option>
            </select>
            <span className="pointer-events-none absolute inset-y-0 right-0 flex w-[15px] items-center justify-center border border-[#ababab] bg-[#e1e1e1]">
              <Chevron />
            </span>
          </div>
        </div>
        <div className="mt-[3px] flex justify-between pl-3 pr-1">
          <div className="flex flex-col gap-1">
            <Check disabled>Büyük/küçük harf eşleştir</Check>
            <Check disabled>Yalnızca tam sözcükleri bul</Check>
            <Check checked>
              <u>J</u>oker karakter kullan
            </Check>
          </div>
          <div className="flex w-[151px] flex-col gap-1">
            <Check disabled>Önek eşleştir</Check>
            <Check disabled>Sonek eşleştir</Check>
            <span className="h-3" />
            <Check>
              Noktalama karakterlerini <u>y</u>oksay
            </Check>
            <Check>
              Boşluk karak<u>t</u>erlerini yoksay
            </Check>
          </div>
        </div>
        <div className="mt-[43px]">
          <Legend>Değiştir</Legend>
        </div>
        <div className="mt-[5px] flex gap-[9px] pl-3">
          <button className={`flex w-[61px] items-center justify-center gap-[3px] ${BTN}`}>
            <span>
              <u>B</u>içim
            </span>
            <Caret className="text-[#222]" />
          </button>
          <button className={`flex w-[61px] items-center justify-center gap-[3px] ${BTN}`}>
            <span>
              <u>Ö</u>zel
            </span>
            <Caret className="text-[#222]" />
          </button>
          <button
            disabled
            className="h-[19px] w-[91px] whitespace-nowrap border border-[#bfbfbf] bg-[#cccccc] text-[#9c9c9c]"
          >
            Biçimlendirme Yok
          </button>
        </div>
      </div>
    </div>
  );
}

function StatusBar() {
  return (
    <footer className="flex h-[18px] items-center border-t border-[#d2d2d2] bg-[#f1f1f1] pl-[6px] pr-2 text-[10px] text-[#555]">
      <span>Sayfa 38/189</span>
      <span className="ml-[10px]">2/56052 sözcük</span>
      <svg viewBox="0 0 12 11" className="ml-2 h-[11px] w-3" fill="none" stroke="#777">
        <path d="M5.500 1.500v8.500M.5.5h4l1 1 1-1h1M.5.5v9h4l1 1 1-1M7 3l4 4M11 3 7 7" />
      </svg>
      <button aria-label="Okuma modu" className="ml-auto mr-[10px]">
        <svg viewBox="0 0 12 11" className="h-[11px] w-3" fill="none" stroke="#777">
          <path d="M6 1.500V11M.5.5H5l1 1 1-1h4.500v9H7l-1 1-1-1H.500zM2 3h2.500M2 5h2.500M2 7h2.500M7.500 3H10M7.500 5H10M7.500 7H10" />
        </svg>
      </button>
      <button aria-label="Sayfa düzeni" className="flex h-full w-8 items-center justify-center bg-[#c8c8c8]">
        <svg viewBox="0 0 12 11" className="h-[11px] w-3" fill="none" stroke="#555">
          <path d="M.5.5h11v10H.500zM2 2.500h8M2 4.500h8M2 6.500h8M2 8.500h8" />
        </svg>
      </button>
      <button aria-label="Web düzeni" className="ml-[10px]">
        <svg viewBox="0 0 12 11" className="h-[11px] w-3" fill="none" stroke="#777">
          <path d="M5 9.500H.5V.5h10V3M2 2.500h7M2 4.500h4M2 6.500h3" />
          <circle cx="8.500" cy="7.500" r="2.800" />
          <path d="M7 6l3 3" strokeWidth="1.500" />
        </svg>
      </button>
      <button aria-label="Uzaklaştır" className="ml-[13px]">
        <svg viewBox="0 0 6 6" className="h-[6px] w-[6px]" stroke="#444" strokeWidth="1.500">
          <path d="M0 3h6" />
        </svg>
      </button>
      <input
        type="range"
        aria-label="Yakınlaştırma"
        min={10}
        max={190}
        defaultValue={114}
        className="ml-1 mr-[3px] h-3 w-[84px] appearance-none bg-[linear-gradient(#999,#999)] bg-[length:100%_1px] bg-center bg-no-repeat [&::-webkit-slider-thumb]:h-[10px] [&::-webkit-slider-thumb]:w-[4px] [&::-webkit-slider-thumb]:appearance-none [&::-webkit-slider-thumb]:bg-[#555]"
      />
      <button aria-label="Yakınlaştır" className="ml-1">
        <svg viewBox="0 0 7 7" className="h-[7px] w-[7px]" stroke="#444" strokeWidth="1.500">
          <path d="M0 3.500h7M3.500 0v7" />
        </svg>
      </button>
      <span className="ml-[10px]">%125</span>
    </footer>
  );
}

const NUMBER = "font-['Open_Sans'] text-[53px] font-extrabold leading-[54px] text-[#ed1c24]";

export default function App() {
  return (
    <div className="relative flex h-screen flex-col overflow-hidden bg-[#e6e6e6] font-['Lato',sans-serif] text-[10px]">
      <TitleBar />
      <TabRow />
      <Ribbon />
      <div className="flex min-h-0 flex-1">
        <NavPane />
        <Document />
        <StylesPane />
        <SelectionPane />
      </div>
      <StatusBar />

      <svg
        viewBox="0 0 116 32"
        className="absolute left-[335px] top-[125px] h-8 w-[116px]"
        fill="none"
        stroke="#ed1c24"
        strokeWidth="3"
      >
        <path d="M2.500 8.500H57V2.500l55 13-55 13.500V23.500H2.500z" />
      </svg>
      <span className={`absolute left-[518px] top-[201px] ${NUMBER}`}>1</span>
      <span className={`absolute left-[518px] top-[247px] ${NUMBER}`}>2</span>
      <span className={`absolute left-[518px] top-[386px] ${NUMBER}`}>3</span>
      <FindReplaceDialog />
    </div>
  );
}
